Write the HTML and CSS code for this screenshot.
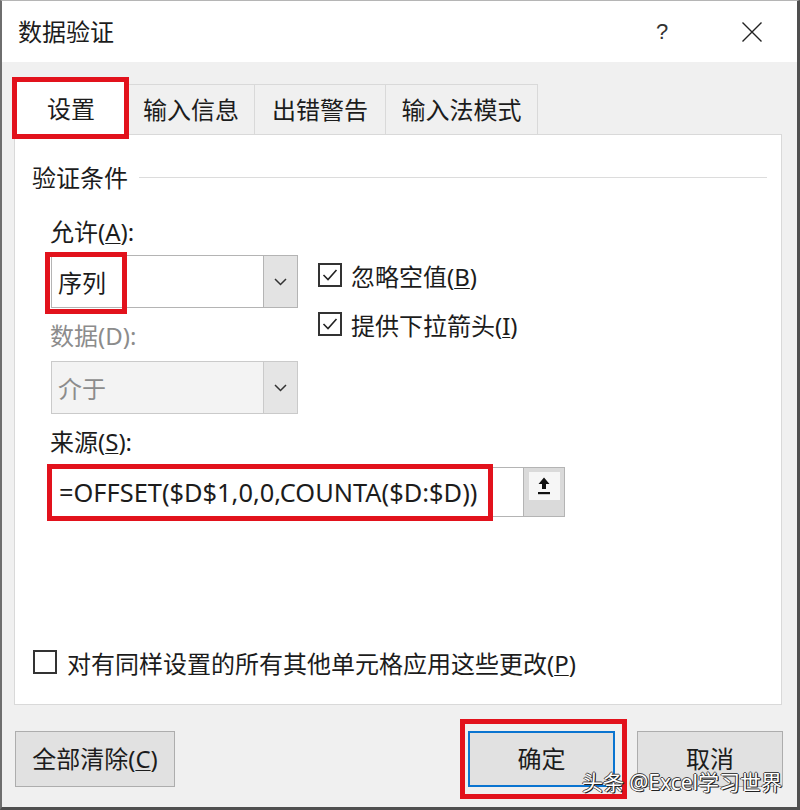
FILE: index.html
```html
<!DOCTYPE html>
<html lang="zh-CN">
<head>
    <meta charset="UTF-8">
    <title>数据验证</title>
    <link rel="stylesheet" href="styles.css">
</head>
<body>
<div class="window">
    <div class="titlebar">
        <span class="title">数据验证</span>
        <span class="tb-btn help">?</span>
        <span class="tb-btn close">
            <svg width="22" height="20" viewBox="0 0 22 20"><path d="M1.5 0.5 L20.5 19.5 M20.5 0.5 L1.5 19.5" stroke="#222" stroke-width="1.4" fill="none"/></svg>
        </span>
    </div>

    <div class="body">
        <div class="tabs">
            <div class="tab active">设置<span class="mark mark-tab"></span></div>
            <div class="tab w2">输入信息</div>
            <div class="tab w3">出错警告</div>
            <div class="tab w4">输入法模式</div>
        </div>

        <div class="panel">
            <div class="group-title"><span>验证条件</span><span class="rule"></span></div>

            <div class="form">
                <div class="label first">允许(<u>A</u>):</div>
                <div class="allow-grid">
                    <div class="left">
                        <div class="combo">
                            <span class="value">序列</span>
                            <span class="drop"><svg width="13" height="8" viewBox="0 0 13 8"><path d="M1 1 L6.5 6.5 L12 1" stroke="#333" stroke-width="1.5" fill="none"/></svg></span>
                            <span class="mark mark-allow"></span>
                        </div>
                        <div class="label disabled">数据(D):</div>
                        <div class="combo disabled">
                            <span class="value">介于</span>
                            <span class="drop"><svg width="13" height="8" viewBox="0 0 13 8"><path d="M1 1 L6.5 6.5 L12 1" stroke="#333" stroke-width="1.5" fill="none"/></svg></span>
                        </div>
                    </div>
                    <div class="checks">
                        <div class="check">
                            <span class="box"><svg width="20" height="20" viewBox="0 0 20 20"><path d="M3.5 10 L8 14.5 L16.5 5" stroke="#222" stroke-width="1.6" fill="none"/></svg></span>
                            <span>忽略空值(<u>B</u>)</span>
                        </div>
                        <div class="check">
                            <span class="box"><svg width="20" height="20" viewBox="0 0 20 20"><path d="M3.5 10 L8 14.5 L16.5 5" stroke="#222" stroke-width="1.6" fill="none"/></svg></span>
                            <span>提供下拉箭头(<u>I</u>)</span>
                        </div>
                    </div>
                </div>

                <div class="label">来源(<u>S</u>):</div>
                <div class="source">
                    <span class="formula">=OFFSET($D$1,0,0,COUNTA($D:$D))</span>
                    <span class="pick">
                        <span class="pick-face">
                            <svg width="12" height="18" viewBox="0 0 12 18"><path d="M6 0.5 L11.5 7 H8 V12 H4 V7 H0.5 Z" fill="#111"/><rect x="0" y="15" width="12" height="2.2" fill="#111"/></svg>
                        </span>
                    </span>
                    <span class="mark mark-source"></span>
                </div>
            </div>

            <div class="check apply-all">
                <span class="box"></span>
                <span>对有同样设置的所有其他单元格应用这些更改(<u>P</u>)</span>
            </div>
        </div>

        <div class="footer">
            <button class="btn clear">全部清除(<u>C</u>)</button>
            <button class="btn ok">确定<span class="mark mark-ok"></span></button>
            <button class="btn cancel">取消</button>
            <span class="watermark">头条 @Excel学习世界</span>
        </div>
    </div>
</div>
</body>
</html>
```

FILE: styles.css
```css
body {
    margin: 0;
    padding: 0;
    font-family: "Noto Sans", "Noto Sans CJK SC", sans-serif;
    font-size: 24px;
    color: #1c1c1c;
    background: #f0f0f0;
}
u {
    text-decoration-thickness: 1px;
    text-underline-offset: 2px;
}
.window {
    width: 800px;
    height: 810px;
    box-sizing: border-box;
    border-top: 1px solid #b5b5b5;
    border-left: 2px solid #6e6e6e;
    border-right: 3px solid #4f4f4f;
    border-bottom: 3px solid #4f4f4f;
    background: #f0f0f0;
    overflow: hidden;
}
.titlebar {
    height: 61px;
    background: #fff;
    display: flex;
    align-items: center;
    padding: 0 22px 0 16px;
}
.title {
    line-height: 32px;
}
.tb-btn {
    width: 46px;
    display: flex;
    justify-content: center;
    align-items: center;
}
.help {
    margin-left: auto;
    margin-right: 44px;
    font-size: 22px;
    color: #333;
    font-family: "Liberation Sans", sans-serif;
}

/* tabs */
.tabs {
    display: flex;
    align-items: flex-end;
    height: 55px;
    margin: 17px 0 0 12px;
}
.tab {
    height: 50px;
    box-sizing: border-box;
    border: 1px solid #d9d9d9;
    border-bottom: none;
    background: #f0f0f0;
    display: flex;
    align-items: center;
    justify-content: center;
    margin-left: -1px;
    line-height: 32px;
}
.tab.active {
    position: relative;
    z-index: 2;
    width: 114px;
    height: 56px;
    margin-left: 0;
    margin-bottom: -1px;
    padding-top: 2px;
    background: #fff;
}
.tab.w2 { width: 128px; }
.tab.w3 { width: 132px; }
.tab.w4 { width: 153px; }

/* red annotation boxes */
.mark {
    position: absolute;
    border: 5px solid #e2121c;
    box-sizing: border-box;
    pointer-events: none;
}
.mark-tab {
    left: -3px;
    top: -3px;
    width: 117px;
    height: 62px;
}
.mark-allow {
    left: -7px;
    top: -4px;
    width: 82px;
    height: 62px;
}
.mark-source {
    left: -5px;
    top: -4px;
    width: 446px;
    height: 57px;
}
.mark-ok {
    left: -10px;
    top: -14px;
    width: 167px;
    height: 80px;
}

/* panel */
.panel {
    width: 768px;
    height: 571px;
    margin-left: 12px;
    box-sizing: border-box;
    border: 1px solid #d9d9d9;
    background: #fff;
    position: relative;
    z-index: 1;
}
.group-title {
    display: flex;
    align-items: center;
    height: 32px;
    margin: 27px 14px 0 17px;
    line-height: 32px;
}
.rule {
    flex: 1;
    height: 1px;
    background: #dcdcdc;
    margin-left: 11px;
    margin-top: -2px;
}
.form {
    padding-left: 36px;
}
.label {
    height: 32px;
    line-height: 32px;
    margin-top: 12px;
    margin-bottom: 9px;
    margin-left: -1px;
}
.label.first {
    margin-top: 22px;
    margin-bottom: 7px;
}
.label.disabled {
    color: #8c8c8c;
}
.allow-grid {
    display: grid;
    grid-template-columns: 247px auto;
    column-gap: 20px;
}
.combo {
    position: relative;
    height: 53px;
    box-sizing: border-box;
    border: 1px solid #b4b4b4;
    background: #fff;
    display: flex;
}
.combo .value {
    flex: 1;
    padding-left: 6px;
    display: flex;
    align-items: center;
}
.combo .drop {
    width: 33px;
    border-left: 1px solid #b4b4b4;
    background: #e3e3e3;
    display: flex;
    align-items: center;
    justify-content: center;
}
.combo.disabled {
    background: #f3f3f3;
    border-color: #cacaca;
    color: #8c8c8c;
}
.combo.disabled .drop {
    border-left-color: #cacaca;
    background: #e5e5e5;
}
.checks {
    padding-top: 8px;
    display: flex;
    flex-direction: column;
    gap: 25px;
}
.check {
    display: flex;
    align-items: center;
    gap: 9px;
    height: 24px;
}
.box {
    width: 24px;
    height: 24px;
    box-sizing: border-box;
    border: 2px solid #333;
    background: #fff;
    display: flex;
    align-items: center;
    justify-content: center;
    flex-shrink: 0;
}
.source {
    position: relative;
    width: 514px;
    height: 50px;
    display: flex;
    box-sizing: border-box;
    border: 1px solid #b4b4b4;
    background: #fff;
}
.formula {
    width: 471px;
    padding-left: 7px;
    box-sizing: border-box;
    font-size: 25.4px;
    display: flex;
    align-items: center;
    white-space: nowrap;
}
.pick {
    flex: 1;
    border-left: 1px solid #b4b4b4;
    background: #dadada;
    display: flex;
    justify-content: center;
    align-items: flex-start;
    padding-top: 4px;
}
.pick-face {
    width: 31px;
    height: 28px;
    background: #f6f6f6;
    display: flex;
    align-items: center;
    justify-content: center;
}
.apply-all {
    margin: 133px 0 0 18px;
    gap: 10px;
}

/* footer */
.footer {
    position: relative;
    display: flex;
    align-items: flex-start;
    margin-top: 26px;
    padding: 0 14px 0 13px;
}
.btn {
    font: inherit;
    line-height: 24px;
    color: #1c1c1c;
    height: 56px;
    box-sizing: border-box;
    background: #e1e1e1;
    border: 1px solid #adadad;
    padding: 0;
    position: relative;
}
.btn.clear {
    width: 160px;
}
.btn.ok {
    width: 147px;
    margin-left: auto;
    border: 2px solid #0a74d0;
}
.btn.cancel {
    width: 146px;
    margin-left: 22px;
}
.watermark {
    position: absolute;
    right: 15px;
    top: 41px;
    font-size: 21px;
    line-height: 20px;
    color: #fff;
    text-shadow: 1px 1px 0 #222, -1px 0 0 #444, 0 -1px 0 #444, 1px 0 0 #333;
    white-space: nowrap;
}
```
